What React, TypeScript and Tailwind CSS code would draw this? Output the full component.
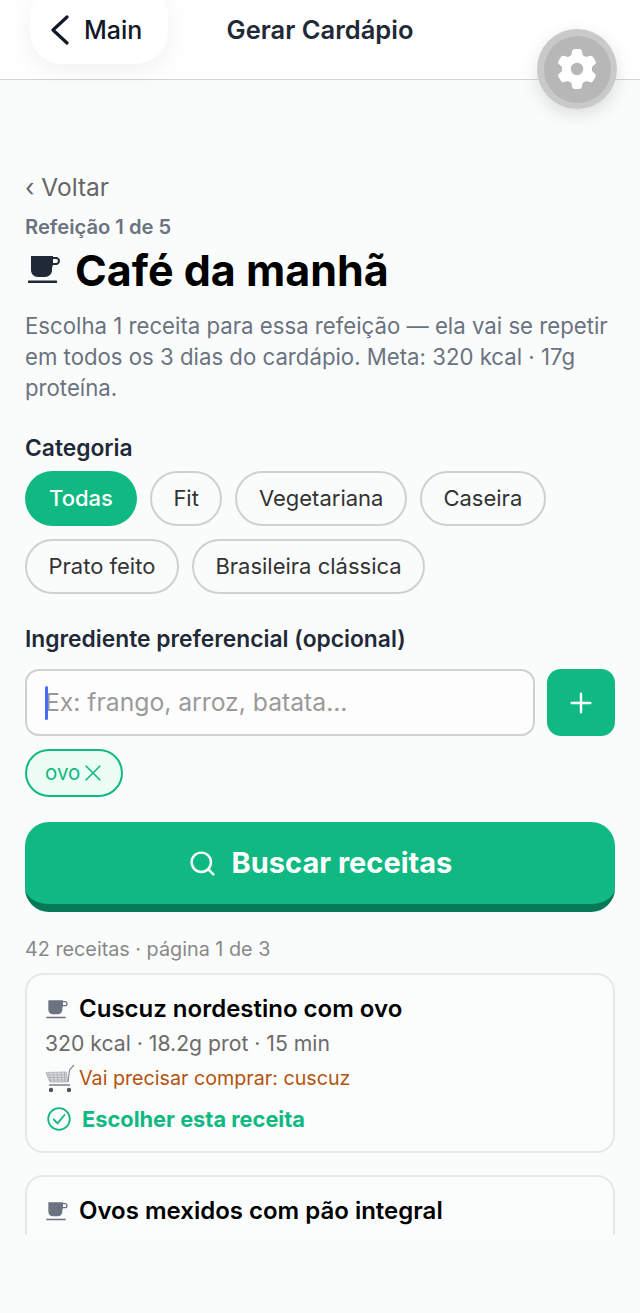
import React from 'react';
import { Plus, Search, X } from 'lucide-react';
import { FaGear } from 'react-icons/fa6';

const CATEGORY_ROWS = [
  ['Todas', 'Fit', 'Vegetariana', 'Caseira'],
  ['Prato feito', 'Brasileira clássica'],
];

const CupIcon: React.FC<{ className?: string }> = ({ className }) => (
  <svg viewBox="0 0 32 30" className={className} fill="currentColor">
    <path d="M3 2h22v1h3c2.200 0 4 1.800 4 4s-1.800 4-4 4h-3.200c-.4 1.500-.8 3-.8 5 0 4-3 7-7 7H10c-4 0-7-3-7-7V2z M25 5v4h3a2 2 0 0 0 0-4h-3z" fillRule="evenodd" />
    <rect x="0" y="26.500" width="29" height="2.500" rx="0.500" />
  </svg>
);

const CartIcon: React.FC = () => (
  <svg viewBox="0 0 30 30" className="w-[30px] h-[30px] shrink-0" fill="none">
    <g stroke="#a8acb3" strokeWidth="0.800">
      <path d="M1 8.500l20.500-0.500 1 10H5z" fill="#d9dbdf" />
      <path d="M4 8.500l2 9.500M8 8.200l1.500 9.800M12 8.200l1 9.800M16 8.100l.5 9.900M19.500 8l0 10" />
      <path d="M1.500 11h20.500M2.500 13.500h19.500M3.500 16h19" />
    </g>
    <path d="M23 18l1.500-12L29 1" stroke="#8b8f96" strokeWidth="1.200" />
    <path d="M4 21h21" stroke="#7b8088" strokeWidth="1.500" />
    <circle cx="6" cy="26" r="2.200" fill="#4b5563" />
    <circle cx="24" cy="26" r="2.200" fill="#4b5563" />
  </svg>
);

const CheckIcon: React.FC = () => (
  <svg viewBox="0 0 24 24" className="w-[24px] h-[24px] shrink-0 ml-[2px]" fill="none" stroke="currentColor" strokeWidth="1.800" strokeLinecap="round" strokeLinejoin="round">
    <circle cx="12" cy="12" r="10.800" />
    <path d="M6.800 12.500l3.700 3.800L17.500 8" />
  </svg>
);

const RecipeTitle: React.FC<{ title: string }> = ({ title }) => (
  <div className="flex items-center gap-[11px]">
    <CupIcon className="w-[22px] h-[20px] text-[#6b7280] ml-[1px]" />
    <span className="text-[24px] leading-[30px] font-semibold text-black">{title}</span>
  </div>
);

export default function App() {
  return (
    <div className="relative w-[640px] h-[1313px] overflow-hidden bg-[#fafcfb] font-['Inter',sans-serif]">
      <header className="h-[80px] bg-white border-b border-[#d4d4d4] grid grid-cols-[1fr_auto_1fr] items-start">
        <div className="pl-[30px]">
          <div className="w-[138px] h-[80px] -mt-[16px] rounded-[32px] bg-white shadow-[0_8px_28px_rgba(0,0,0,0.06)] flex items-center pl-[20px] pt-[13px]">
            <svg viewBox="0 0 20 30" className="w-[20px] h-[30px] text-[#111827] -mt-[2px]" fill="none" stroke="currentColor" strokeWidth="3.200" strokeLinecap="round" strokeLinejoin="round">
              <path d="M17 2L3 15l14 13" />
            </svg>
            <span className="text-[25px] font-medium text-[#111827] ml-[14px]">Main</span>
          </div>
        </div>
        <h1 className="text-[25.500px] leading-[60px] font-semibold text-[#1f2937]">Gerar Cardápio</h1>
      </header>

      <main className="h-[1155px] overflow-hidden px-[25px] bg-[#fafcfb]">
        <div className="pt-[92px] text-[24.500px] leading-[30px] text-[#666666]">‹ Voltar</div>
        <div className="mt-[13px] text-[20.200px] leading-[24px] font-semibold text-[#6b7280]">Refeição 1 de 5</div>
        <div className="mt-[5px] flex items-center gap-[14px]">
          <CupIcon className="w-[34px] h-[30px] text-[#1f2937] ml-[2px] -mt-[2px]" />
          <h2 className="text-[43px] leading-[52px] font-bold text-black">Café da manhã</h2>
        </div>
        <p className="mt-[14px] text-[22.200px] leading-[31px] text-[#6b7280]">
          Escolha 1 receita para essa refeição — ela vai se repetir em todos os 3 dias do cardápio. Meta: 320 kcal · 17g proteína.
        </p>

        <div className="mt-[30px] text-[22.800px] leading-[30px] font-semibold text-[#1f2937]">Categoria</div>
        <div className="mt-[8px] flex flex-col gap-[13px]">
          {CATEGORY_ROWS.map((row, i) => (
            <div key={i} className="flex gap-[13px]">
              {row.map(label => (
                <div
                  key={label}
                  className={
                    label === 'Todas'
                      ? 'h-[55px] px-[24px] rounded-full bg-[#10b981] text-white font-medium text-[22px] flex items-center'
                      : 'h-[55px] px-[21.500px] rounded-full border-2 border-[#d0d0d0] text-[#333333] text-[22px] flex items-center'
                  }
                >
                  {label}
                </div>
              ))}
            </div>
          ))}
        </div>

        <div className="mt-[30px] text-[22.800px] leading-[30px] font-semibold text-[#1f2937]">Ingrediente preferencial (opcional)</div>
        <div className="mt-[15px] flex gap-[12px]">
          <div className="relative w-[510px] h-[67px] rounded-[14px] border-2 border-[#d0d0d0] bg-[#fdfdfd] flex items-center pl-[18px] pt-[1px] text-[24.700px] text-[#9a9a9a]">
            <span className="absolute left-[18px] top-[15px] w-[3px] h-[34px] rounded-full bg-[#4a6cf7]" />
            Ex: frango, arroz, batata...
          </div>
          <div className="w-[68px] h-[67px] rounded-[14px] bg-[#10b981] flex items-center justify-center">
            <Plus size={32} strokeWidth={1.800} className="text-white" />
          </div>
        </div>
        <div className="mt-[13px] w-[98px] h-[48px] rounded-full border-2 border-[#10b981] bg-[#ecfdf5] flex items-center pl-[18px] text-[20.500px] text-[#10b981]">
          ovo
          <X size={28} strokeWidth={1.300} className="-ml-[1px]" />
        </div>

        <div className="mt-[25px] h-[90px] rounded-[24px] bg-[#10b981] border-b-[8px] border-[#047857] flex items-center justify-center gap-[15px] text-white">
          <Search size={29} strokeWidth={2} />
          <span className="text-[29px] font-bold">Buscar receitas</span>
        </div>

        <div className="mt-[25px] text-[19.800px] leading-[24px] text-[#888888]">42 receitas · página 1 de 3</div>

        <div className="mt-[12px] h-[180px] rounded-[18px] border-2 border-[#e8e8e8] bg-[#fbfcfc] pl-[18px] pt-[19px]">
          <RecipeTitle title="Cuscuz nordestino com ovo" />
          <div className="mt-[4px] text-[21.200px] leading-[30px] text-[#6b6b6b]">320 kcal · 18.2g prot · 15 min</div>
          <div className="mt-[5px] flex items-center gap-[4px] h-[32px]">
            <CartIcon />
            <span className="text-[19.700px] text-[#b4530f]">Vai precisar comprar: cuscuz</span>
          </div>
          <div className="mt-[10px] flex items-center gap-[11px] h-[28px] text-[#10b981]">
            <CheckIcon />
            <span className="text-[21.800px] font-bold">Escolher esta receita</span>
          </div>
        </div>

        <div className="mt-[22px] h-[180px] rounded-[18px] border-2 border-[#e8e8e8] bg-[#fbfcfc] pl-[18px] pt-[19px]">
          <RecipeTitle title="Ovos mexidos com pão integral" />
        </div>
      </main>

      {/* settings bubble floats over the header */}
      <div className="absolute left-[537px] top-[29px] w-[80px] h-[80px] rounded-full bg-[#c9c9c9] shadow-[0_6px_18px_rgba(0,0,0,0.12)] flex items-center justify-center">
        <div className="w-[67px] h-[67px] rounded-full bg-[#b7b7b7] flex items-center justify-center">
          <FaGear size={40} className="text-white" />
        </div>
      </div>
    </div>
  );
}
